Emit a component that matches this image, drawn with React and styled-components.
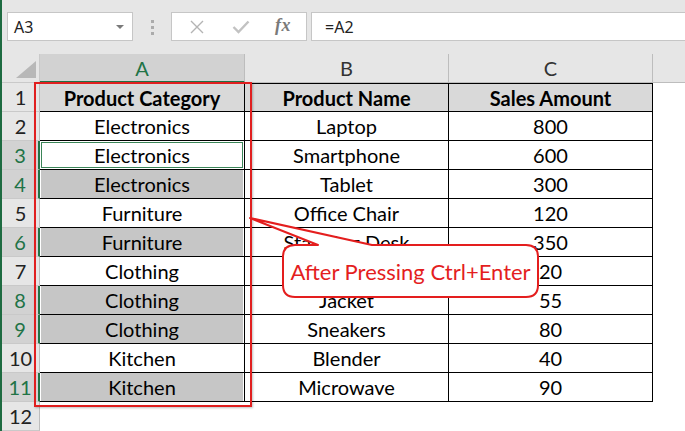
import React from "react";
import styled, { createGlobalStyle } from "styled-components";

const GREEN = "#217346";

const GlobalStyle = createGlobalStyle`
  body {
    margin: 0;
    background: #fff;
    overflow: hidden;
  }
`;

// B7 sits fully under the callout in the screenshot, so it stays empty
const rows = [
  { cat: "Electronics", name: "Laptop", amount: 800, mark: "none" },
  { cat: "Electronics", name: "Smartphone", amount: 600, mark: "active" },
  { cat: "Electronics", name: "Tablet", amount: 300, mark: "sel" },
  { cat: "Furniture", name: "Office Chair", amount: 120, mark: "none" },
  { cat: "Furniture", name: "Standing Desk", amount: 350, mark: "sel" },
  { cat: "Clothing", name: "", amount: 20, mark: "none" },
  { cat: "Clothing", name: "Jacket", amount: 55, mark: "sel" },
  { cat: "Clothing", name: "Sneakers", amount: 80, mark: "sel" },
  { cat: "Kitchen", name: "Blender", amount: 40, mark: "none" },
  { cat: "Kitchen", name: "Microwave", amount: 90, mark: "sel" },
];

export default function App() {
  return (
    <>
      <GlobalStyle />
      <Window>
        <FormulaBar>
          <NameBox>
            A3
            <Caret />
          </NameBox>
          <Grip>
            <span />
            <span />
            <span />
          </Grip>
          <FxButtons>
            <IconSlot $left="18px">
              <svg width="14" height="14" viewBox="0 0 14 14">
                <path d="M1 1 L13 13 M13 1 L1 13" stroke="#b4b4b4" strokeWidth="1.4" fill="none" />
              </svg>
            </IconSlot>
            <IconSlot $left="60px">
              <svg width="18" height="14" viewBox="0 0 18 14">
                <path d="M1.5 7 L6.5 12 L16.5 1.5" stroke="#c2c2c2" strokeWidth="2.4" fill="none" />
              </svg>
            </IconSlot>
            <Fx>fx</Fx>
          </FxButtons>
          <FormulaInput>=A2</FormulaInput>
        </FormulaBar>

        <Sheet>
          <Corner>
            <svg width="20" height="17" viewBox="0 0 20 17">
              <path d="M20 0 L20 17 L0 17 Z" fill="#b8b8b8" />
            </svg>
          </Corner>
          <ColHead $active>A</ColHead>
          <ColHead>B</ColHead>
          <ColHead>C</ColHead>
          <ColHead $last />

          <RowHead>1</RowHead>
          <Cell $head $first>Product Category</Cell>
          <Cell $head $first>Product Name</Cell>
          <Cell $head $first>Sales Amount</Cell>
          <Blank />

          {rows.map((r, i) => (
            <React.Fragment key={i}>
              <RowHead $sel={r.mark !== "none"}>{i + 2}</RowHead>
              <Cell $mark={r.mark}>{r.cat}</Cell>
              <Cell>{r.name}</Cell>
              <Cell>{r.amount}</Cell>
              <Blank />
            </React.Fragment>
          ))}

          <RowHead>12</RowHead>
          <Blank />
          <Blank />
          <Blank />
          <Blank />
        </Sheet>

        <RedFrame />

        <Callout>
          <svg width="300" height="95" viewBox="0 0 300 95">
            <path
              d="M50 35 L73 35 L5 8 L127 35 L281 35 Q293 35 293 47 L293 75 Q293 87 281 87 L50 87 Q38 87 38 75 L38 47 Q38 35 50 35 Z"
              fill="#fff"
              stroke="#e41e1e"
              strokeWidth="2"
              strokeLinejoin="round"
            />
          </svg>
          <CalloutText>After Pressing Ctrl+Enter</CalloutText>
        </Callout>
      </Window>
    </>
  );
}

const Window = styled.div`
  position: relative;
  width: 685px;
  height: 431px;
  overflow: hidden;
  box-sizing: border-box;
  border-left: 2px solid #1e6b41;
  background: #fff;
  font-family: Lato, "Open Sans", sans-serif;
`;

const FormulaBar = styled.div`
  height: 54px;
  box-sizing: border-box;
  background: #e6e6e6;
  display: flex;
  align-items: flex-start;
  padding: 12px 0 0 5px;
  font-family: "Noto Sans", "Open Sans", sans-serif;
  font-size: 16px;
  color: #222;
`;

const NameBox = styled.div`
  width: 126px;
  height: 29px;
  box-sizing: border-box;
  border: 1px solid #c6c6c6;
  background: #fff;
  display: flex;
  align-items: center;
  justify-content: space-between;
  padding: 0 8px 0 6px;
`;

const Caret = styled.span`
  width: 0;
  height: 0;
  border-left: 4px solid transparent;
  border-right: 4px solid transparent;
  border-top: 4px solid #7a7a7a;
  margin-top: 1px;
`;

const Grip = styled.div`
  margin-left: 18px;
  padding-top: 8px;
  display: flex;
  flex-direction: column;
  gap: 3px;
  span {
    width: 3px;
    height: 3px;
    background: #ababab;
  }
`;

const FxButtons = styled.div`
  position: relative;
  margin-left: 17px;
  width: 136px;
  height: 29px;
  box-sizing: border-box;
  border: 1px solid #c6c6c6;
  background: #fff;
`;

const IconSlot = styled.span`
  position: absolute;
  left: ${(p) => p.$left};
  top: 0;
  bottom: 0;
  display: flex;
  align-items: center;
`;

const Fx = styled.span`
  position: absolute;
  left: 103px;
  top: 2px;
  font-family: "Liberation Serif", serif;
  font-style: italic;
  font-weight: bold;
  font-size: 18px;
  color: #7a7a7a;
  letter-spacing: 0.5px;
`;

const FormulaInput = styled.div`
  margin-left: 4px;
  flex: 1;
  height: 29px;
  box-sizing: border-box;
  border: 1px solid #c6c6c6;
  border-right: none;
  background: #fff;
  display: flex;
  align-items: center;
  padding-left: 13px;
`;

const Sheet = styled.div`
  display: grid;
  grid-template-columns: 38px 205px 204px 204px 1fr;
  grid-template-rows: repeat(13, 29px);
  font-size: 20px;
`;

const Corner = styled.div`
  background: #e6e6e6;
  border-right: 1px solid #c9c9c9;
  border-bottom: 1px solid #c9c9c9;
  box-sizing: border-box;
  display: flex;
  align-items: flex-end;
  justify-content: flex-end;
  padding: 0 3px 4px 0;
`;

const ColHead = styled.div`
  box-sizing: border-box;
  background: ${(p) => (p.$active ? "#d2d2d2" : "#e6e6e6")};
  color: ${(p) => (p.$active ? GREEN : "#333")};
  border-right: ${(p) => (p.$last ? "none" : "1px solid #bdbdbd")};
  border-bottom: ${(p) => (p.$active ? `2px solid ${GREEN}` : "1px solid #bdbdbd")};
  display: flex;
  align-items: center;
  justify-content: center;
`;

const RowHead = styled.div`
  box-sizing: border-box;
  background: ${(p) => (p.$sel ? "#d2d2d2" : "#e6e6e6")};
  color: ${(p) => (p.$sel ? GREEN : "#222")};
  border-right: ${(p) => (p.$sel ? `2px solid ${GREEN}` : "1px solid #bdbdbd")};
  border-bottom: 1px solid #c9c9c9;
  display: flex;
  align-items: center;
  justify-content: center;
`;

const markStyle = {
  active: `box-shadow: inset 0 0 0 1px #fff, inset 0 0 0 2px #3b8558;`,
  sel: `background: #c6c6c6; box-shadow: inset 1px 0 0 #fff, inset -1px 0 0 #fff;`,
  none: ``,
};

const Cell = styled.div`
  box-sizing: border-box;
  background: ${(p) => (p.$head ? "#d9d9d9" : "#fff")};
  font-weight: ${(p) => (p.$head ? 700 : 400)};
  color: #000;
  border-right: 1px solid #000;
  border-bottom: 1px solid #000;
  border-top: ${(p) => (p.$first ? "1px solid #000" : "none")};
  display: flex;
  align-items: center;
  justify-content: center;
  ${(p) => markStyle[p.$mark || "none"]}
`;

const Blank = styled.div`
  background: #fff;
`;

const RedFrame = styled.div`
  position: absolute;
  left: 32px;
  top: 82px;
  width: 218px;
  height: 325px;
  box-sizing: border-box;
  border: 2px solid #e01f1f;
  box-shadow: 1px 1px 2px rgba(0, 0, 0, 0.25);
  pointer-events: none;
`;

const Callout = styled.div`
  position: absolute;
  left: 243px;
  top: 210px;
  width: 300px;
  height: 95px;
  svg {
    position: absolute;
    left: 0;
    top: 0;
  }
`;

const CalloutText = styled.div`
  position: absolute;
  left: 38px;
  top: 35px;
  width: 255px;
  height: 52px;
  display: flex;
  align-items: center;
  justify-content: center;
  color: #e41e1e;
  font-size: 22px;
`;
